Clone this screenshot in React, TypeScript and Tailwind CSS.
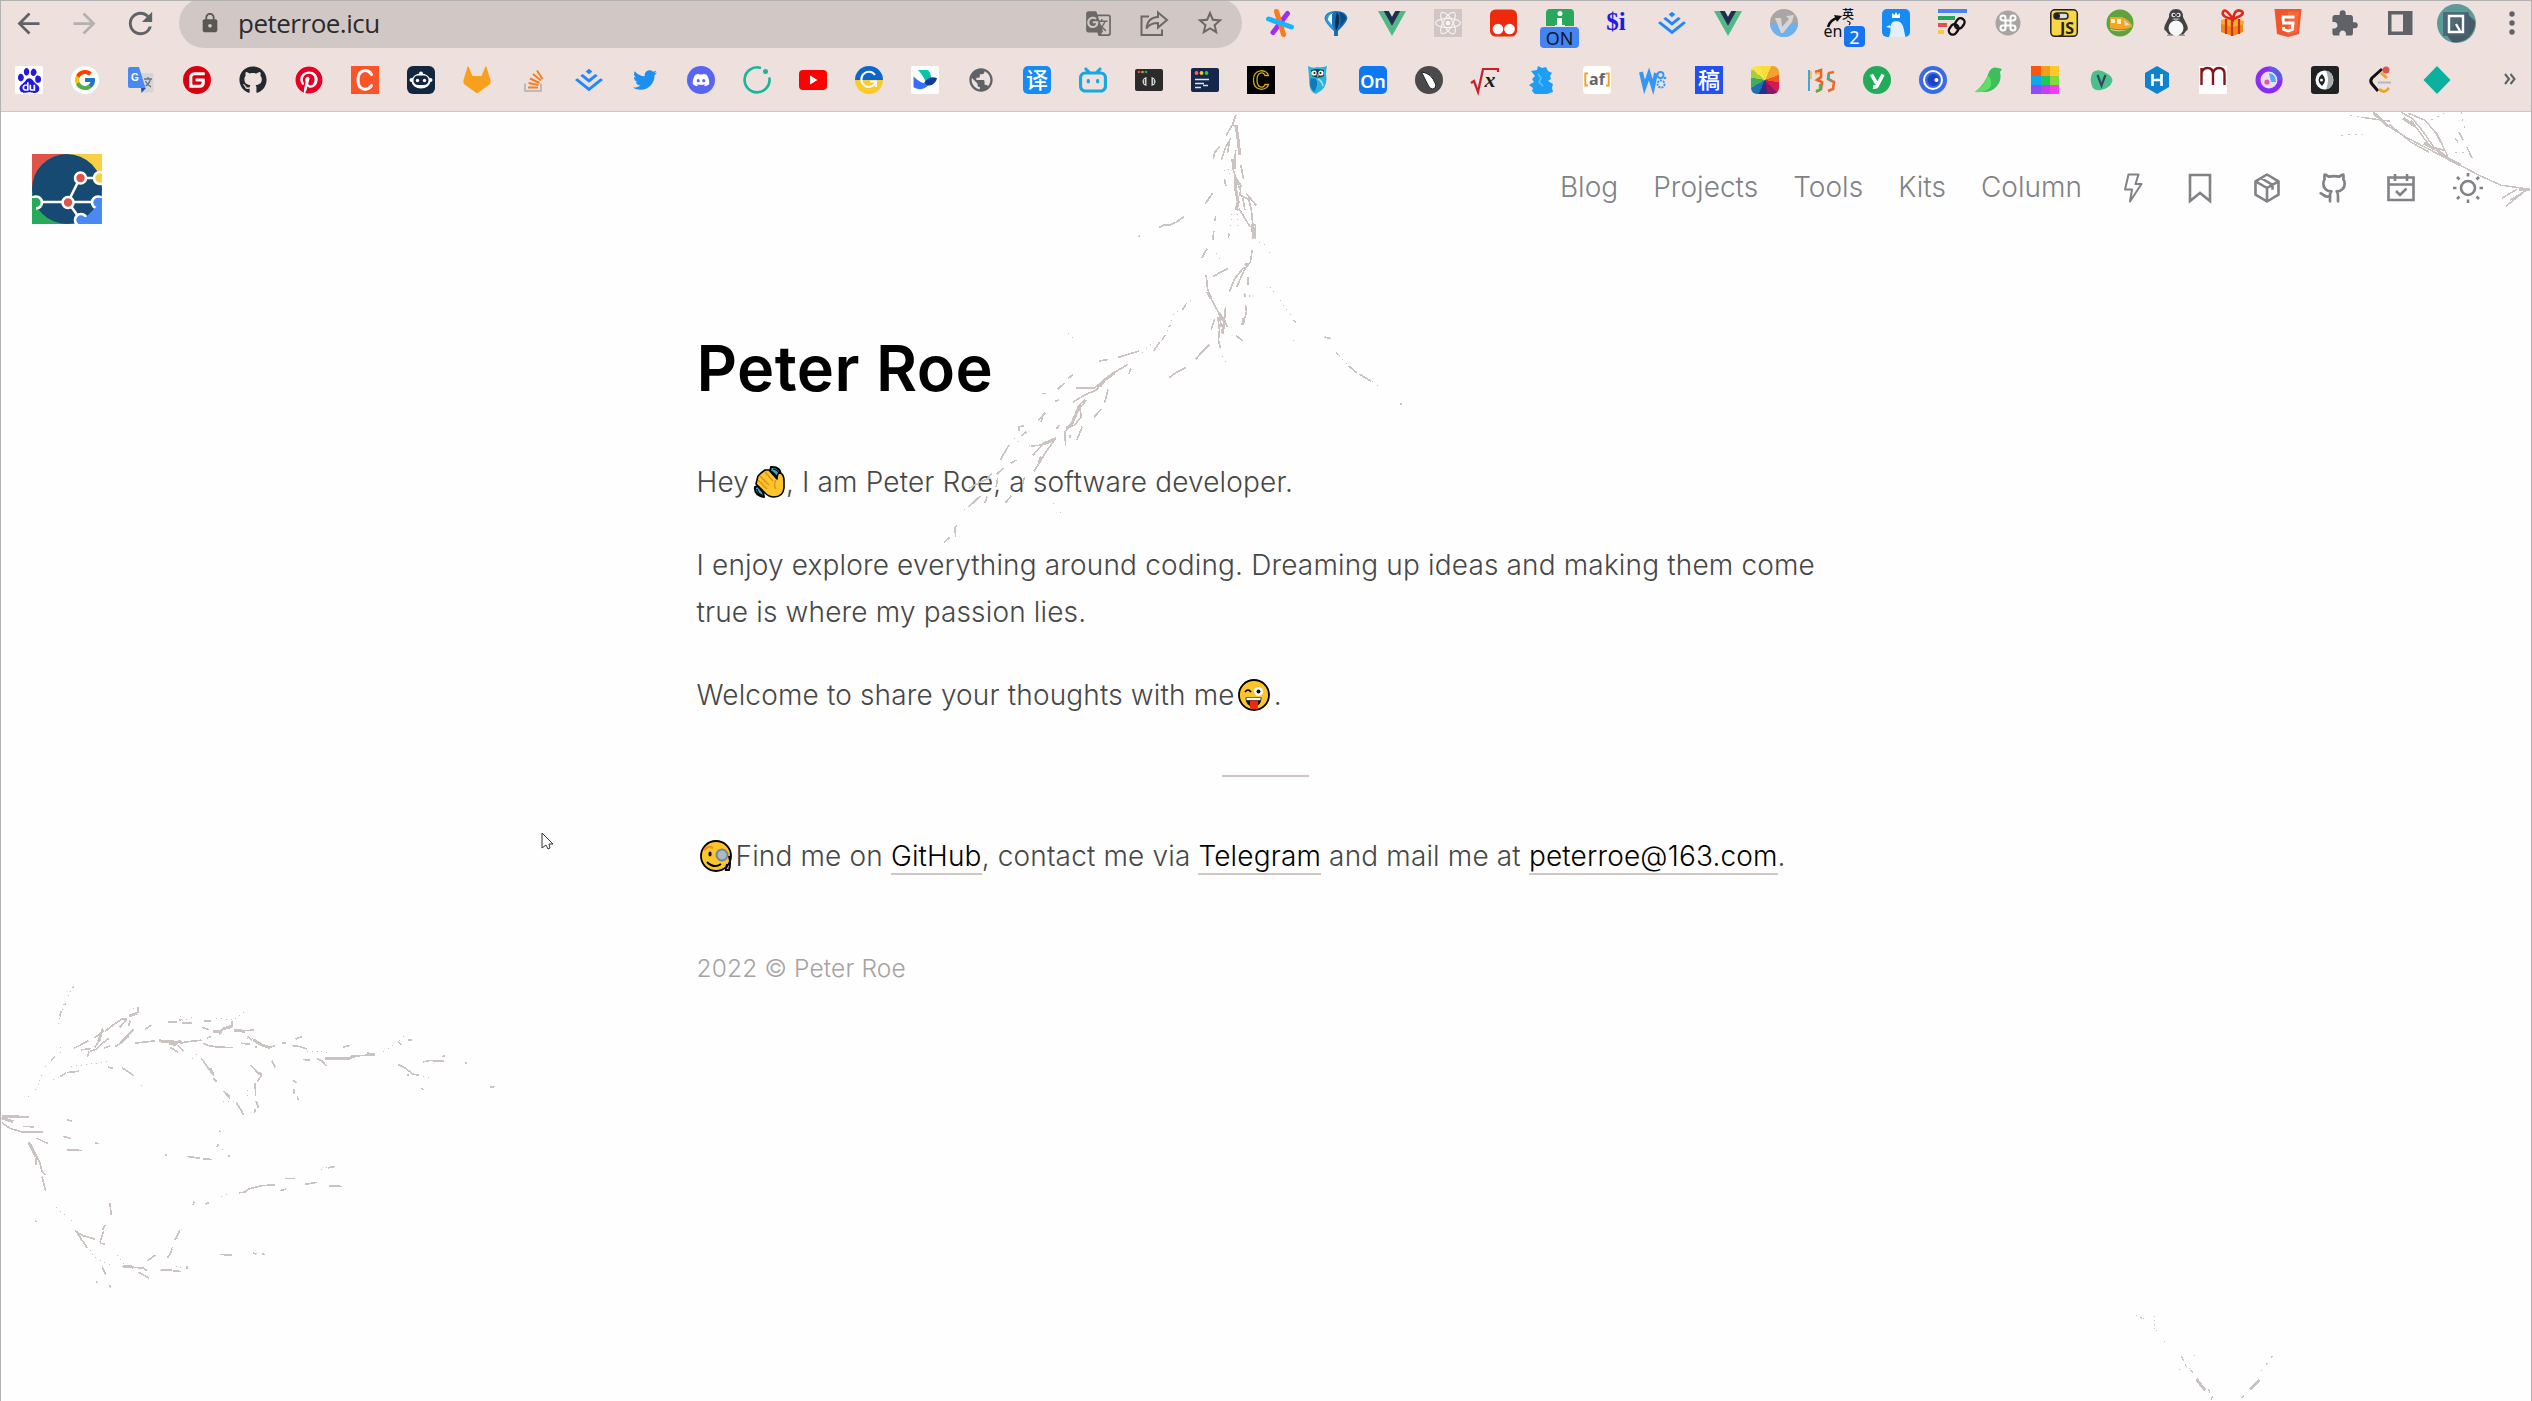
import React from "react";
import { MdGTranslate, MdStarOutline, MdExtension, MdPublic, MdLock, MdRefresh, MdArrowBack, MdArrowForward } from "react-icons/md";
import { FaGithub, FaPinterest, FaTwitter, FaDiscord, FaReact } from "react-icons/fa";
import { SiGitee, SiJuejin, SiBilibili, SiBaidu } from "react-icons/si";
import { FcGoogle } from "react-icons/fc";
import { Github } from "lucide-react";

type Kids = { children: React.ReactNode };

/* 28px icon canvas shared by the bookmark and extension glyphs */
const Ico = ({ children }: Kids) => (
  <svg viewBox="0 0 28 28" className="size-7 shrink-0 overflow-visible">{children}</svg>
);

const Cell = ({ children }: Kids) => (
  <div className="flex w-14 shrink-0 items-center justify-center">{children}</div>
);

const Label = ({ x = 14, y, size, fill, children, family = "Liberation Sans", weight = 700, italic = false }: {
  x?: number; y: number; size: number; fill: string; children: React.ReactNode; family?: string; weight?: number; italic?: boolean;
}) => (
  <text x={x} y={y} fontSize={size} fill={fill} textAnchor="middle" fontFamily={`"${family}", "Noto Sans CJK SC", sans-serif`} fontWeight={weight} fontStyle={italic ? "italic" : "normal"}>{children}</text>
);

const Vue = () => (
  <Ico>
    <path d="M0 2h5.6L14 17 22.4 2H28L14 27z" fill="#4dba87" />
    <path d="M5.6 2h5.2L14 7.8 17.200 2h5.2L14 17z" fill="#1f2f4c" />
  </Ico>
);

const Juejin = () => <SiJuejin className="size-7 text-[#1e88ff]" />;

const bookmarks: React.ReactNode[] = [
  <div className="flex size-7 items-center justify-center rounded-[2px] bg-white"><SiBaidu className="size-[25px] text-[#2319dc]" /></div>,
  <div className="flex size-7 items-center justify-center rounded-full bg-white"><FcGoogle className="size-6" /></div>,
  <Ico>
    <path d="M10 7h15a1.500 1.500 0 0 1 1.500 1.500V25a1.500 1.500 0 0 1-1.500 1.500H16z" fill="#d5d5d5" />
    <path d="M14 22h5l-4.500 5z" fill="#2a4fb0" />
    <path d="M3 1h9l6.500 21H3a2 2 0 0 1-2-2V3a2 2 0 0 1 2-2z" fill="#4889f4" />
    <Label x={8} y={15} size={10} fill="#fff">G</Label>
    <path d="M17 13h8M21 11v2M23.500 13c-1 4-3 6-5 7M18.500 15c1.500 3 3 4.500 5.500 6" stroke="#667780" strokeWidth="1.300" fill="none" />
  </Ico>,
  <div className="flex size-7 items-center justify-center rounded-full bg-white"><SiGitee className="size-7 text-[#d9000f]" /></div>,
  <FaGithub className="size-7 text-[#24292e]" />,
  <div className="flex size-7 items-center justify-center rounded-full bg-white"><FaPinterest className="size-7 text-[#e60023]" /></div>,
  <Ico>
    <rect width="28" height="28" fill="#fb542b" />
    <path d="M20.500 8.500C17 2.500 7 3 7 14s10 11 13.500 5.500" fill="none" stroke="#fff" strokeWidth="3" strokeLinecap="round" />
  </Ico>,
  <Ico>
    <rect width="28" height="28" rx="6" fill="#12263f" />
    <circle cx="14" cy="7.500" r="2" fill="#fff" />
    <ellipse cx="14" cy="15" rx="9.500" ry="7.500" fill="#fff" />
    <circle cx="4.500" cy="14" r="2" fill="#fff" /><circle cx="23.500" cy="14" r="2" fill="#fff" />
    <rect x="6.500" y="9.500" width="15" height="9.500" rx="4.500" fill="#12263f" />
    <circle cx="10.500" cy="14.500" r="1.700" fill="#fff" /><circle cx="17.500" cy="14.500" r="1.700" fill="#fff" />
  </Ico>,
  <Ico><path d="M14 27.500 1.500 18.500Q0 17 .4 14.500L4.500.8q.8-.8 1.400.5L9.500 10h9L22.100 1.300q.6-1.300 1.400-.5l4.100 13.700q.4 2.500-1.100 4z" fill="#f8a01d" /></Ico>,
  <Ico>
    <path d="M6 17.500v7.500h16v-7.500" fill="none" stroke="#bcbbbb" strokeWidth="2" />
    <path d="M9 21.500h10M9.500 17l10 2M11 12.500l9.500 4.500M14 8l8 6.500M18 4.500l5.500 8.500" stroke="#f48023" strokeWidth="2" />
  </Ico>,
  <Juejin />,
  <FaTwitter className="size-6 text-[#1d8ff2]" />,
  <div className="flex size-7 items-center justify-center rounded-full bg-[#5865f2]"><FaDiscord className="size-[18px] text-white" /></div>,
  <Ico>
    <path d="M17 1.700A12.500 12.500 0 1 0 26.500 12.500" fill="none" stroke="#16b79c" strokeWidth="2.600" strokeLinecap="round" />
    <circle cx="22.500" cy="5.500" r="2.500" fill="#16b79c" />
  </Ico>,
  <Ico>
    <rect x="0" y="4" width="28" height="20" rx="4" fill="#f00" />
    <path d="M11 9.500 18.500 14 11 18.500z" fill="#fff" />
  </Ico>,
  <Ico>
    <path d="M0 14a14 14 0 0 1 28 0z" fill="#0c66cc" /><path d="M0 14a14 14 0 0 0 28 0z" fill="#fccb2a" />
    <path d="M20 9A7.500 7.500 0 1 0 21 15.500h-6M21 15v6" fill="none" stroke="#fff" strokeWidth="2" />
  </Ico>,
  <Ico>
    <rect width="28" height="28" rx="2" fill="#fff" />
    <path d="M7 4h10q3 3 3 8l-5 4Q11 8 7 4z" fill="#00c8ac" />
    <path d="M2.500 10.500C7 15 12 18 18 18c-3 5-10 7-15.500 3z" fill="#3370ff" />
    <path d="M13 17c3-5 7-7 13-5-1 5-6 9-10 7z" fill="#133c9a" />
  </Ico>,
  <MdPublic className="size-7 text-[#5f6368]" />,
  <Ico><rect width="28" height="28" rx="5" fill="#168bf5" /><Label y={22} size={22} fill="#fff" family="Noto Sans CJK SC" weight={500}>译</Label></Ico>,
  <SiBilibili className="size-7 text-[#16a8e0]" />,
  <Ico>
    <rect y="3" width="28" height="22" rx="2" fill="#2b2b2b" />
    <circle cx="4" cy="6" r="1.300" fill="#ee4444" /><circle cx="7.500" cy="6" r="1.300" fill="#c9a227" /><circle cx="11" cy="6" r="1.300" fill="#2fa84f" />
    <path d="M11.500 11q-4 1-4 4.500t4 4.500zM16.500 11q4 1 4 4.500t-4 4.500z" fill="#dcdcdc" /><path d="M9.500 13v5M18.500 13v5" stroke="#555" strokeWidth="1.200" />
  </Ico>,
  <Ico>
    <rect y="2" width="28" height="24" rx="2" fill="#15284b" />
    <circle cx="5.500" cy="7" r="1.900" fill="#ff5f57" /><circle cx="10.500" cy="7" r="1.900" fill="#febc2e" /><circle cx="15.500" cy="7" r="1.900" fill="#28c840" />
    <path d="M4 13.500h14M4 17.500h9M4 21.500h6M12 19.500h5" stroke="#dbe3f0" strokeWidth="1.400" />
  </Ico>,
  <Ico>
    <rect width="28" height="28" fill="#000" />
    <path d="M21.500 9.500C20 3 6.500 2 6.500 14s13.500 11 15 4.500h-3.500c-1.500 4-8 4-8-4.500s6.500-8.500 8-4.500z" fill="none" stroke="#cda71e" strokeWidth="1.300" />
  </Ico>,
  <Ico>
    <path d="M5 0q5 3 9 1 5 1 10-1-1 4-1 8 2 10-4 16l-6 4q-6-2-6.500-9Q6 9 5 0z" fill="#2db3d9" />
    <path d="M8 4q6-2 13 0v6q-6 3-12 0z" fill="#14425a" />
    <circle cx="11" cy="7" r="2.600" fill="#fff" /><circle cx="18" cy="7" r="2.600" fill="#fff" /><circle cx="11.500" cy="7" r="1.100" fill="#222" /><circle cx="17.500" cy="7" r="1.100" fill="#222" />
    <path d="M13.500 8.500h2.500l-1.200 3z" fill="#f5a623" />
    <path d="M8 12q-3 8 3 14 5-7 2-13z" fill="#1478b8" /><path d="M15 13q4 2 5 7" stroke="#a9e4f5" strokeWidth="1.500" fill="none" />
  </Ico>,
  <Ico><rect width="28" height="28" rx="5" fill="#0d78f2" /><Label y={21.500} size={18} fill="#fff" family="Noto Sans" weight={600}>On</Label></Ico>,
  <Ico><circle cx="14" cy="14" r="14" fill="#4a4a4a" /><path d="M6.500 6q10 1 14 12 1 4-3 5-3 0-5-5z" fill="#fff" stroke="#222" strokeWidth="1" /></Ico>,
  <Ico>
    <path d="m0 17 3-2 4 11L12 3h15v3" fill="none" stroke="#c8202a" strokeWidth="2.200" />
    <Label x={19} y={21} size={22} fill="#1c1c1c" family="Liberation Serif" italic>x</Label>
  </Ico>,
  <Ico>
    <path d="m4 5 6-1 1-4 4 2 4-1 2 4 4 2-2 3 1 3-3 2 5 3-1 4 1 4-6 2H8l-3-3 1-3-4-3 5-3-2-3 3-3z" fill="#1e9df5" />
    <path d="M11 8l3 4-2 4 4 4" stroke="#56c2ff" strokeWidth="1.600" fill="none" />
  </Ico>,
  <Ico>
    <rect width="28" height="28" rx="4" fill="#fff" />
    <Label y={18.500} size={16} fill="#666" family="Noto Sans">af</Label>
    <path d="M5 7.500H2.300v12H5M23 7.500h2.700v12H23" fill="none" stroke="#f2a01e" strokeWidth="1.900" />
  </Ico>,
  <Ico>
    <path d="m2 6 3.500 15L10 8l4 13 3-14" fill="none" stroke="#3697f3" strokeWidth="4" />
    <circle cx="21.500" cy="9" r="3" fill="none" stroke="#3697f3" strokeWidth="1.800" /><circle cx="22" cy="18" r="3.500" fill="none" stroke="#3697f3" strokeWidth="2" strokeDasharray="2 1" /><circle cx="26" cy="12" r="1.300" fill="#3697f3" />
  </Ico>,
  <Ico><rect width="28" height="28" fill="#2450f2" /><Label y={22} size={22} fill="#fff" family="Noto Sans CJK SC" weight={500}>稿</Label></Ico>,
  <div className="size-7 rounded-[6px] bg-[conic-gradient(from_-20deg,#f9dc3c_0_45deg,#f2a32e_45deg_90deg,#ea5a2a_90deg_120deg,#d8194f_120deg_155deg,#8e1560_155deg_190deg,#2a2f8a_190deg_225deg,#1f6fb8_225deg_260deg,#3fae5c_260deg_300deg,#a5cf3c_300deg_330deg,#fbe34c_330deg)]" />,
  <Ico>
    <path d="M2 4v21" stroke="#2f9fd6" strokeWidth="1.800" /><path d="M4 5v8" stroke="#f3b63a" strokeWidth="1.500" />
    <path d="M8 6 14 4v7l-4 3 5 2-1 7-5 3" fill="none" stroke="#e8632a" strokeWidth="2.600" /><path d="M8 8l5-1" stroke="#f5c433" strokeWidth="2" /><path d="M13 18v6l-4 1" stroke="#52b352" strokeWidth="2.400" fill="none" />
    <path d="M27 6l-5 1-1 6 6 3-1 7-5 2" fill="none" stroke="#ee6a2c" strokeWidth="2.600" /><path d="M21.500 7v6l3 2" stroke="#38aea0" strokeWidth="2.200" fill="none" />
  </Ico>,
  <Ico><circle cx="14" cy="14" r="14" fill="#22ab58" /><path d="m8.500 8.500 5 9M20 8.500 14.500 19q-1 2.500-4.500 2" stroke="#fff" strokeWidth="3.600" fill="none" /></Ico>,
  <Ico>
    <circle cx="14" cy="14" r="14" fill="#3a6be6" /><circle cx="14" cy="14" r="9" fill="none" stroke="#fff" strokeWidth="2" /><circle cx="14.500" cy="14" r="6" fill="#1f45c4" /><circle cx="17.500" cy="14" r="2" fill="#fff" />
  </Ico>,
  <Ico>
    <path d="M14 6q3-6 9-4l4 1-2 3q2 8-3 14-5 6-13 6H0q10-8 14-20z" fill="#3cbf5a" /><path d="M13 9Q9 20 0 26q12 1 16-6 1-6-3-11z" fill="#62dd65" />
  </Ico>,
  <Ico>
    <path d="M0 0h10v10H0z" fill="#f9550e" /><path d="M10 0h9v10h-9z" fill="#f59e1c" /><path d="M19 0h9v10h-9z" fill="#fccb2a" />
    <path d="M0 10h10v9H0z" fill="#0ea8f0" /><path d="M10 10h9v9h-9z" fill="#22c55e" /><path d="M19 10h9v9h-9z" fill="#84da38" />
    <path d="M0 19h10v9H0z" fill="#8b4cf7" /><path d="M10 19h9v9h-9z" fill="#c43df0" /><path d="M19 19h9v9h-9z" fill="#f43df0" />
  </Ico>,
  <Ico><path d="M6 6q6-4 13 1 8 4 6 9-2 6-11 8-8 1-9-4Q2 12 6 6z" fill="#4cc08c" /><path d="m10.500 9 4 10.500L18.500 9" stroke="#34495e" strokeWidth="2.200" fill="none" /></Ico>,
  <Ico><path d="m14 0 12 7v14l-12 7-12-7V7z" fill="#0e83cd" /><path d="M9.500 8v12M18.500 8v12M9.500 14h9" stroke="#fff" strokeWidth="2.600" /></Ico>,
  <Ico>
    <rect width="28" height="28" fill="#fff" />
    <path d="M2.500 19V2M2.500 7Q4 2 8.500 2 14 2 14 8v11M14 7q1.500-5 6-5 5.500 0 5.500 6v11" stroke="#84151b" strokeWidth="2.400" fill="none" />
  </Ico>,
  <Ico>
    <circle cx="14" cy="14" r="11" fill="#e9dfee" stroke="#8a2cf5" strokeWidth="5" /><path d="M14 3a11 11 0 0 1 11 11" stroke="#5a5ce8" strokeWidth="5" fill="none" />
    <path d="M14 7q7 1 7 9h-5z" fill="#55a8f2" /><circle cx="12" cy="16" r="2.600" fill="#ee4fa8" />
  </Ico>,
  <Ico>
    <rect width="28" height="28" rx="3" fill="#202123" /><ellipse cx="13.500" cy="14" rx="9" ry="9.500" fill="#fff" /><path d="M15 4.500q4 9 0 19 7-1 7-9.500T15 4.500z" fill="#aaa" /><path d="M11 8q6 6 0 12-7-6 0-12z" fill="#202123" /><circle cx="10.500" cy="14" r="1.500" fill="#fff" />
  </Ico>,
  <Ico>
    <path d="M15 3 5 12q-2.500 3 0 6l6 7" fill="none" stroke="#111" strokeWidth="3" /><path d="M12 23q5 5 9 0l1-1M14 7l6 5" stroke="#f5a11e" strokeWidth="2.800" fill="none" /><path d="M11 16.500h13" stroke="#bcb9b8" strokeWidth="2.200" /><circle cx="19" cy="4" r="3.500" fill="#df5348" />
  </Ico>,
  <Ico><path d="m14 0 13.500 14L14 28 .5 14z" fill="#0bb09e" /></Ico>,
];

const extensions: React.ReactNode[] = [
  <Ico>
    <g strokeWidth="5" strokeLinecap="round"><path d="M21.500 4.500 7 23.500" stroke="#a32cf5" /><path d="m10.500 2.500 7 23" stroke="#ff7a1a" /><path d="m2.500 10 23 8" stroke="#19b4fb" /></g>
  </Ico>,
  <Ico>
    <path d="M2.500 9Q4 2 14 2t11.500 7q-1 5-9.500 13v5h-4v-5Q3 14 2.500 9z" fill="#176fb5" />
    <path d="M10 3q-3 7 2.500 18Q3 14 3.500 9 5 4 10 3z" fill="#2b9be6" /><path d="M11 4Q6 6 6 11l4 5V4z" fill="#f2faff" /><path d="M15 3q4 5 1 15l-2 4q-2-9 1-19z" fill="#0b3050" /><path d="M17 3q7 2 7 7l-6 8q2-8-1-15z" fill="#0d4a80" />
  </Ico>,
  <Vue />,
  <div className="flex size-7 items-center justify-center bg-[#cfc7c5]"><FaReact className="size-[26px] text-[#f8f5f4]" /></div>,
  <Ico><rect y=".5" width="27" height="27" rx="5.500" fill="#ee2a0c" /><circle cx="8" cy="20" r="5.300" fill="#fff" /><circle cx="19.500" cy="20" r="5.300" fill="#fff" /></Ico>,
  <div className="relative">
    <Ico><rect width="28" height="27" rx="4" fill="#27a85a" /><circle cx="14" cy="4.500" r="2.500" fill="#fff" /><path d="M11 9h5v7h3v4H9v-4h2z" fill="#fff" /></Ico>
    <div className="absolute -left-[6px] top-[17px] flex h-[22px] w-[39px] items-center justify-center rounded-[4px] border-t border-[#ede0dd] bg-[#4284f3] font-['Noto_Sans'] text-[18px] font-normal leading-none text-[#111827]">ON</div>
  </div>,
  <Ico><Label y={21} size={25} fill="#1d1de0" family="Liberation Serif" weight={700}>$i</Label></Ico>,
  <Juejin />,
  <Vue />,
  <Ico>
    <circle cx="14" cy="14" r="14" fill="#a9a7a6" /><path d="M0 14a14 14 0 0 0 28 0z" fill="#6db2ef" /><path d="M5 9h6l1 9L19 10l-3-3 8-1-2 7L13 24h-2z" fill="#ddd3d0" />
  </Ico>,
  <div className="relative">
    <Ico>
      <Label x={22} y={10} size={12} fill="#111" family="Noto Sans CJK SC" weight={500}>英</Label>
      <Label x={7} y={28} size={16} fill="#111" family="Noto Sans" weight={400}>en</Label>
      <path d="M2 18q2-7 9-9" stroke="#111" strokeWidth="2.600" fill="none" /><path d="m8 6 8 1-5 6z" fill="#111" /><path d="M21 12q5 1 2 4" stroke="#111" strokeWidth="1.200" fill="none" />
    </Ico>
    <div className="absolute left-[18px] top-[17px] flex h-[21px] w-[21px] items-center justify-center rounded-[4px] bg-[#1873f0] font-['Noto_Sans'] text-[18px] font-normal leading-none text-white">2</div>
  </div>,
  <Ico>
    <rect width="28" height="28" rx="5" fill="#168bf5" /><path d="m10 4 2.500 2L14 3l1.500 3L18 4v5h-8z" fill="#fff" /><path d="M7 28q2-5 1.500-10Q9 12 14 12q6 0 7.500 7 1 5 2 9z" fill="#e4effc" /><path d="m8 16-4 2 5 1z" fill="#fff" />
  </Ico>,
  <Ico>
    <path d="M0 0h29v4H0z" fill="#4a85ee" /><path d="M0 7h17v4H0z" fill="#28a55c" /><path d="M0 14h9v4H0z" fill="#df5348" /><path d="M0 21h6v4H0z" fill="#f7c93e" />
    <g fill="none" stroke="#111" strokeWidth="2.400"><rect x="18" y="9" width="8" height="11" rx="4" transform="rotate(35 22 14)" /><rect x="12" y="15" width="8" height="11" rx="4" transform="rotate(35 16 20)" /></g>
  </Ico>,
  <Ico><circle cx="14" cy="14" r="12.500" fill="#a8a4a3" /><path d="M11.500 8.800a2.500 2.500 0 1 0-2.500 2.700h10a2.500 2.500 0 1 0-2.500-2.700v10.400a2.500 2.500 0 1 0 2.500-2.700H9a2.500 2.500 0 1 0 2.500 2.700z" fill="none" stroke="#fff" strokeWidth="2" /></Ico>,
  <Ico>
    <rect x=".8" y=".8" width="26.500" height="26.500" rx="4" fill="#f8d648" stroke="#222" strokeWidth="1.500" /><rect x="4" y="4" width="14" height="6" rx="3" fill="#ddd" stroke="#222" strokeWidth="1.500" /><circle cx="7" cy="7" r="3" fill="#222" />
    <Label x={17} y={24.500} size={16} fill="#222" family="Noto Sans">JS</Label>
  </Ico>,
  <Ico><circle cx="14" cy="14" r="13.500" fill="#5fa33c" /><path d="M4 8h12q6 2 10 8v2q-8 4-22 1z" fill="#f5a51e" /><path d="M5 10h4v4H5zM11 10h4v5h-4z" fill="#fff1c9" /><path d="m18 11 6 5-5 1z" fill="#d8d8d8" /><path d="M4 20q12 3 20 0-9 4-19 1z" fill="#e8e0d0" /></Ico>,
  <Ico>
    <path d="M14 0q7 0 7 8l4 8q2 5-1 6l-3 4H7l-3-4q-3-1-1-6l4-8q0-8 7-8z" fill="#424242" /><ellipse cx="14" cy="19" rx="7.500" ry="7.500" fill="#f7f7f7" /><circle cx="11.500" cy="6" r="2.200" fill="#ddd" /><circle cx="16.500" cy="6" r="2.200" fill="#ddd" /><circle cx="12" cy="6" r="1" /><circle cx="16" cy="6" r="1" /><path d="M10 10q4-2 8 0l-4 2z" fill="#999" /><path d="M5 26q4-2 7 1H5zM16 27q3-3 7-1v1z" fill="#9a9a9a" />
  </Ico>,
  <Ico>
    <path d="m3 13 11 3 11-4v11l-10 4-12-4z" fill="#e8891a" /><path d="m3 11 11-3 12 4v3l-11 3L3 15z" fill="#f7ae2d" /><path d="M14 11v16M8 10v15M21 10v15" stroke="#d32f1c" strokeWidth="2.200" /><path d="M15 10Q3 8 5 3t10 7Q17-1 23 2t-8 8" fill="none" stroke="#e0291a" strokeWidth="2.600" />
  </Ico>,
  <Ico><path d="M.5 0h27L25 25l-11 3-11-3z" fill="#f1552b" /><path d="M14 2.500h11l-2 21L14 26z" fill="#f7693d" /><path d="M20.500 8H9l.4 6h9.600l-.7 6.500L14 22l-4.300-1.500-.3-2.500" fill="none" stroke="#fff" strokeWidth="2.900" /></Ico>,
  <MdExtension className="size-[29px] text-[#5f6368]" />,
  <Ico><path d="M2 2h24.500v24H2z" fill="#5f6368" /><path d="M5.500 5.500h11.500v17H5.500z" fill="#ede0dd" /></Ico>,
  <svg viewBox="0 0 39 39" className="size-[39px] shrink-0">
    <circle cx="19.500" cy="19.500" r="19.500" fill="#5b9c9b" /><path d="M9 30 29 9l9 8a19.500 19.500 0 0 1-23 21z" fill="#475a66" /><path d="M6 8h26v24H6z" fill="#4c6170" opacity=".85" /><path d="M12 12h14v16H12z" fill="none" stroke="#fff" strokeWidth="2.400" /><path d="m19 20 4 7" stroke="#fff" strokeWidth="2.400" />
  </svg>,
  <svg viewBox="0 0 6 24" className="h-6 w-[6px]"><g fill="#5f6368"><circle cx="3" cy="3" r="2.700" /><circle cx="3" cy="12" r="2.700" /><circle cx="3" cy="21" r="2.700" /></g></svg>,
];

const BrowserBar = () => (
  <header className="h-28 w-full overflow-hidden border-b border-[#cfc7c5] bg-[#ede0dd]">
    <div className="flex h-[46px] items-center">
      <Cell><MdArrowBack className="size-[33px] text-[#5f6368]" /></Cell>
      <Cell><MdArrowForward className="size-[33px] text-[#b5b0af]" /></Cell>
      <Cell><MdRefresh className="size-[35px] text-[#5f6368]" /></Cell>
      <div className="ml-[11px] flex h-[50px] w-[1063px] shrink-0 items-center rounded-full bg-[#d1c8c6] pl-[20px] pr-[4px]">
        <MdLock className="size-[22px] text-[#5a5654]" />
        <span className="ml-[17px] font-['Open_Sans'] text-[26px] font-normal leading-none tracking-[-0.5px] text-[#292b2e]">peterroe.icu</span>
        <div className="ml-auto flex text-[#6b6867]">
          <Cell><MdGTranslate className="size-[27px]" /></Cell>
          <Cell>
            <Ico><path d="M9 8H1.500v18.500H22V21" fill="none" stroke="currentColor" strokeWidth="2" transform="translate(0 -.5)" /><path d="M18 3.500 27 11l-9 7.500v-4.500q-8 0-11.500 5.500Q7.500 8.500 18 8z" fill="none" stroke="currentColor" strokeWidth="2" /></Ico>
          </Cell>
          <Cell><MdStarOutline className="size-[30px]" /></Cell>
        </div>
      </div>
      <div className="ml-[10px] flex items-center">{extensions.map((icon, i) => <Cell key={i}>{icon}</Cell>)}</div>
    </div>
    <div className="flex h-[68px] items-center pl-px">
      {bookmarks.map((icon, i) => <Cell key={i}>{icon}</Cell>)}
      <svg viewBox="0 0 12 12" className="ml-[39px] size-[12px] shrink-0 -translate-y-px"><path d="m1 1 4 5-4 5M6.500 1l4 5-4 5" fill="none" stroke="#5f6368" strokeWidth="2.100" /></svg>
    </div>
  </header>
);

const Logo = () => (
  <svg viewBox="0 0 70 70" className="size-[70px]">
    <path d="M0 0h35v35H0z" fill="#df5348" /><path d="M35 0h35v35H35z" fill="#f7d046" /><path d="M0 35h35v35H0z" fill="#27ab5b" /><path d="M35 35h35v35H35z" fill="#4a89f3" />
    <circle cx="35" cy="35" r="35" fill="#164a72" />
    <g stroke="#fff" strokeWidth="2.600">
      <path d="M36 48 48 24h18M4 48h60M36 48l12 17" fill="none" />
      <circle cx="48.500" cy="24" r="5.500" fill="#df5348" /><circle cx="36" cy="48.500" r="5.500" fill="#df5348" />
      <circle cx="68" cy="24" r="6" fill="#f7d046" /><circle cx="4" cy="48.500" r="6" fill="#27ab5b" /><circle cx="66" cy="48.500" r="6" fill="#4a89f3" /><circle cx="49" cy="66" r="6" fill="#4a89f3" />
    </g>
    <path d="M0 51h4v5H0zM0 44h4v3H0z" fill="#27ab5b" /><path d="M67 44h3v10h-3zM49 63h5l10-10h6v17H46z" fill="#4a89f3" /><path d="M66.500 20H70v8h-3.500z" fill="#f7d046" />
  </svg>
);

const NavIcon = ({ children }: Kids) => (
  <svg viewBox="0 0 32 32" className="size-8" fill="none" stroke="currentColor" strokeWidth="2.600">{children}</svg>
);

const Nav = () => (
  <nav className="flex items-center gap-[35px] text-[28px] leading-[47.6px] tracking-[0.03px] text-[#818186]">
    {["Blog", "Projects", "Tools", "Kits", "Column"].map((t) => <a key={t} href="#">{t}</a>)}
    <NavIcon><path d="M11.500 2.500h10L18.500 12h6L13 29.500l2-12H8z" strokeWidth="2" strokeLinejoin="round" /></NavIcon>
    <NavIcon><path d="M6 3h20v26l-10-8-10 8z" /></NavIcon>
    <NavIcon><path d="m16 2.500 11.500 6.800v13.400L16 29.500 4.500 22.700V9.300zM4.500 9.300 16 16l11.500-6.700M16 16v13.500M10 6l11.500 6.800v5" strokeLinejoin="round" /></NavIcon>
    <Github className="size-8" strokeWidth={2} />
    <NavIcon><path d="M3.500 5.500h25v22.500h-25zM3.500 12.500h25M10 2v7M22 2v7M11 19l4 4 6.500-6.500" /></NavIcon>
    <NavIcon><circle cx="16" cy="16" r="7" /><path d="M16 1v3.500M16 27.500v3.500M1 16h3.500M27.500 16h3.500M5 5l2.500 2.500M24.500 24.500l2.500 2.500M27 5l-2.500 2.500M7.500 24.500l-2.500 2.500" /></NavIcon>
  </nav>
);

const Wave = () => (
  <svg viewBox="0 0 34 34" className="-mr-px ml-[4px] inline-block size-[34px] overflow-visible align-[-7px]">
    <path d="M18 2q10-1 10 10l-5-1Q21 8 17 6zM2 22q-1 8 9 10l-1-5-5-6z" fill="#35a7c4" stroke="#000" strokeWidth="2" strokeLinejoin="round" />
    <path d="M20 4q6 1 6 6M4 24q1 5 5 6" fill="none" stroke="#000" strokeWidth="1.200" />
    <path d="M8 8 12 5l4 0 8 9q0-6 3-6 4 1 4 8v7q-1 9-10 9-5 0-9-4L3 19l1-4 1-4z" fill="#fcc52c" stroke="#000" strokeWidth="1.600" strokeLinejoin="round" />
    <path d="m7 11 9 9M5 15l9 9M12 7l8 9M23 15q-3 5 0 9" stroke="#e08f1b" strokeWidth="1.400" fill="none" />
  </svg>
);

const Wink = () => (
  <svg viewBox="0 0 34 34" className="ml-[2px] mr-[3px] inline-block size-[34px] overflow-visible align-[-7px]">
    <circle cx="17" cy="17" r="15" fill="#fcc52c" stroke="#000" strokeWidth="1.800" />
    <path d="M8 14q3-4 6 0" fill="none" stroke="#000" strokeWidth="1.700" /><circle cx="21.500" cy="13.500" r="4.500" fill="#fff" /><circle cx="21.500" cy="13.500" r="2" />
    <path d="M8.500 19.500h16q0 9-8 9t-8-9z" fill="#111" /><path d="M9.500 20h14v2.200h-14z" fill="#fff" /><path d="M13 22.500h8v6q0 3-4 3t-4-3z" fill="#ee2a0c" />
  </svg>
);

const Monocle = () => (
  <svg viewBox="0 0 34 34" className="ml-[2px] mr-[3px] inline-block size-[34px] overflow-visible align-[-7px]">
    <circle cx="17" cy="17" r="15" fill="#fcc52c" stroke="#000" strokeWidth="1.800" />
    <path d="M5 11q4-5 9-2" stroke="#f08d1c" strokeWidth="2.400" fill="none" /><ellipse cx="11" cy="15" rx="1.600" ry="2.400" />
    <circle cx="23" cy="16" r="5.500" fill="#a9bbc9" stroke="#6f879b" strokeWidth="2" /><path d="M8 23q7 7 14 2" fill="none" stroke="#000" strokeWidth="2" /><path d="M30 17q2 7 0 14h-3l1-6" stroke="#000" strokeWidth="2" fill="none" />
  </svg>
);

const Link = ({ children }: Kids) => (
  <a href="#" className="border-b-2 border-[#d0c7c5] text-black">{children}</a>
);

/* Plum branches growing in from the window edges */
const Branches = () => (
  <svg viewBox="0 0 2532 1401" className="pointer-events-none absolute inset-0 size-full" shapeRendering="crispEdges" fill="none" stroke="#cbc3c1">
    <g transform="translate(900 110) scale(.3333)" strokeWidth="5">
      <path strokeWidth="9" d="M1010 45 1016 90 1021 135M1004 145 1004 175M1008 200 1009 240 1016 275 1010 300M1058 340 1063 385M1035 465 1045 462M960 610 975 635 968 670M600 830 615 810 645 788M540 885 530 910 515 945 500 955M460 990 430 1002M425 1040 418 1060M1032 625 1030 645M925 545 935 565" />
      <path d="M1009 15 1000 42 980 76M1000 42 1009 50M994 84 978 112 965 150M990 95 984 128M962 108 946 126 941 145M1009 120 1003 165M998 145 1000 175 1008 200M1024 165 1032 205M1008 200 1024 225 1022 255 1048 268 1056 300 1060 345 1068 345 1066 385M1010 205 1022 240M1030 262 1036 300M1018 295 1040 330 1052 350M1040 250 1070 285M975 205 979 228M940 248 920 275M935 255 918 280M948 318 947 332M943 362 940 390M854 319 830 336 812 344 795 344 778 352M715 380 722 376M989 370 986 382M923 415 907 443M985 475 962 487 941 499M1058 420 1053 455 1035 478 1012 530M1035 470 1006 505 990 545M1045 502 1045 525M1037 550 1036 560M1050 555 1050 560M1038 585 1041 605 1030 645M920 495 924 535 937 570 960 612 965 650M978 592 975 630 983 650M955 620 960 660 957 690 963 715M945 628 935 658M1010 676 1030 693M929 704 905 728 889 748M860 772 835 784 808 803M860 583 848 600M812 645 808 650M796 675 788 690M780 697 763 722" />
      <path d="M686 762 640 790 610 815 590 840 555 855 520 876M530 833 585 833 612 812M556 868 540 885 530 910 515 945 496 965 498 1008M540 885 545 920 525 945 500 955M560 870 545 890M626 838 615 878M606 896 583 922M495 818 474 838M520 793 505 806M440 850 426 850M478 870 466 874M437 908 415 932M430 912 425 935M548 950 532 990M512 975 510 985M465 985 430 1002 400 1035M470 982 440 1025 418 1060 403 1084M455 995 425 1005 395 1008M380 965 366 978M374 947 358 950 358 962M328 1005 302 1050M350 1050 333 1060M312 1074 292 1092M278 1090 264 1105 235 1120 208 1135M270 1105 236 1118M294 1105 290 1130M375 1100 370 1120M242 1158 208 1190M263 1160 255 1180M335 1157 318 1178M172 1248 166 1252 168 1280M150 1282 133 1298M718 723 655 742M625 748 598 753M695 775 688 792M480 945 470 957" />
      <path d="M1275 680 1295 686M1310 728 1318 734M1348 768 1372 788M1380 792 1415 813M1503 880 1508 884M1183 630 1190 638" />
      <path strokeWidth="3" strokeDasharray="3 14" d="M1078 395 1110 410 1110 430M1110 530 1140 568 1190 638M1183 690 1183 706M1318 734 1350 770M1418 814 1442 830M977 160 992 190 975 180M950 430 962 448M1015 310 1015 350M997 310 992 350M875 570 820 615 812 650 780 700M752 703 720 735M330 973 355 995 395 1008M508 670 524 686M460 1180 488 1213M193 1200 210 1186M980 755 968 735M1165 773 1162 776" />
    </g>
    <g transform="translate(0 960) scale(.3333)" strokeWidth="5">
      <path strokeWidth="9" d="M476 243 530 247 545 245M508 250 530 255M640 214 665 216M668 208 696 199M702 212 735 214M760 240 785 255 812 264M975 295 1050 296M1050 293 1063 289M1100 282 1125 284M5 469 58 469M88 550 108 590M680 403 690 412M303 222 296 245M370 920 400 922M388 168 412 160M630 325 640 343M775 338 785 346M5 474 40 486M385 228 362 248" />
      <path d="M5 469 86 472M5 474 40 488M70 500 103 501M5 488 30 506 65 516 130 516M110 535 145 552M85 547 105 580 120 610 126 635 137 645M108 595 108 615M126 650 137 695M223 265 265 243M243 270 272 266M270 275 290 268 310 248 326 236M283 235 312 212M285 262 300 240 308 205M262 290 268 275M315 215 340 195 365 178 382 176M380 178 360 202M391 182 386 198M413 160 416 140M402 208 380 230 362 250 346 260M436 208 455 195M330 258 312 265M405 250 465 243M540 250 560 246 605 241M503 187 532 186M536 182 545 178M547 190 575 190M612 184 632 184M510 262 535 278M533 255 550 274M610 250 625 257 655 262 698 263M622 234 634 230M607 203 628 210M668 208 658 225M696 200 696 182M735 212 762 211M742 228 756 242M722 250 750 253M765 262 772 262M812 262 825 258M876 257 900 260 922 268M887 238 907 230M845 250 858 250M910 299 930 301M952 296 965 302 980 318M1063 289 1125 284M1030 262 1050 257M1226 240 1237 240M1195 245 1205 255M1195 314 1218 326 1240 343 1256 346M1270 306 1290 302 1334 304M1395 310 1403 310M1470 382 1486 380M1328 290 1335 287M1222 345 1228 345M1265 386 1272 390M604 295 625 325 642 348M640 355 650 365M670 393 690 415M708 428 722 448 731 466M752 315 770 335 785 346 772 366M766 370 767 410M769 424 776 445M766 458 765 447M816 302 826 322M883 388 883 404M892 410 896 422M880 362 890 368M180 350 198 340M202 338 238 334M325 322 338 325M367 324 385 336 402 348M183 153 180 170M221 80 217 85M198 130 194 135M165 290 154 302M190 530 212 536M200 570 245 572M285 550 296 551M202 480 216 484M562 590 600 595M610 597 635 599M684 590 690 588M650 562 656 554M495 586 500 586M658 512 662 516" />
      <path d="M718 699 735 697 745 688 768 682 790 677 826 676M855 656 884 656M840 693 858 688M915 674 950 668M985 624 1004 620M988 678 1028 680M617 733 628 728M583 725 580 735M330 730 334 765M315 796 308 810M311 815 300 848M226 813 245 826 285 838M230 816 245 840 262 864M300 850 316 853M306 920 318 945M330 975 332 986M292 965 289 970M367 920 430 925 440 932M415 937 430 945 448 956M480 932 515 930M518 934 543 935M562 918 562 927M517 866 512 880 502 895M540 812 525 840M467 885 443 903M660 884 695 886M760 880 770 883M786 883 795 884M107 788 108 782" />
      <path strokeWidth="3" strokeDasharray="3 12" d="M221 80 190 135 175 195M182 262 182 285M75 422 110 385 140 310 155 300M160 360 180 350M320 306 210 320M398 148 415 142M540 168 545 182 583 172M648 176 700 180 735 155M920 275 950 275 985 278M1150 275 1170 265 1220 223M1256 346 1288 352M425 362 422 388M270 870 280 890 305 905 335 916M158 733 205 775 218 785M545 808 515 870M527 920 545 925M650 718 690 700M655 556 668 568M950 637 985 622M760 237 742 235M670 426 705 425M743 390 745 420M590 283 565 310M350 885 370 912" />
    </g>
    <g transform="translate(2100 1290) scale(.3333)" strokeWidth="5">
      <path strokeWidth="9" d="M292 268 318 302M452 300 482 271" />
      <path strokeWidth="4" d="M122 82 130 86M246 200 254 214M259 222 260 228M275 240 281 250M328 298 332 310M427 325 434 317M286 195 286 200M501 224 506 220M516 202 521 199M340 319 337 330" />
      <path strokeWidth="3" strokeDasharray="3 9" d="M111 76 124 82 142 92M166 80 166 124 178 118M196 153 196 158M241 238 241 242M260 228 275 240M487 244 492 236" />
    </g>
    {/* top-right branch, in page coordinates */}
    <g strokeWidth="1.500">
      <path strokeWidth="3" d="M2375 113 2389 126M2425 143 2436 149M2437 149 2450 159 2462 165M2520 189 2531 189M2404 118 2416 126" />
      <path d="M2374 112 2391 127 2407 137 2426 147 2445 157 2461 165 2480 175 2502 185 2531 189M2402 112 2413 118 2423 130 2435 147 2451 160M2409 113 2426 120 2437 133 2449 156M2412 120 2425 138 2433 148M2362 117 2391 121M2531 188 2511 200M2527 190 2507 206M2518 189 2503 198M2468 147 2473 158M2460 132 2464 140M2456 138 2459 142M2427 145 2445 150M2437 132 2444 145M2390 124 2412 142 2430 152" />
      <path strokeWidth="1" strokeDasharray="2 5" d="M2351 115 2375 119M2342 135 2364 134M2432 120 2445 113M2456 152 2468 153M2462 112 2466 130" />
    </g>
  </svg>
);

export default function App() {
  return (
    <div className="relative flex h-[1401px] w-full flex-col overflow-hidden border-r border-[#b3b1b1] bg-[#fefefe] font-['Inter',sans-serif] font-light [font-optical-sizing:none]">
      <BrowserBar />
      <div className="flex items-start justify-between pl-8 pr-[47px] pt-[42px]">
        <Logo />
        <div className="pt-[10px]"><Nav /></div>
      </div>
      <main className="mx-auto mt-[109px] w-[1138px] text-[28px] leading-[47.6px] tracking-[0.155px] text-[#474747]">
        <h1 className="mb-[56px] text-[63px] font-semibold leading-[70px] tracking-[0.4px] text-black">Peter Roe</h1>
        <p className="mb-[35px]">Hey<Wave />, I am Peter Roe, a software developer.</p>
        <p className="mb-[35px]">I enjoy explore everything around coding. Dreaming up ideas and making them come true is where my passion lies.</p>
        <p>Welcome to share your thoughts with me<Wink />.</p>
        <hr className="mx-auto mb-[56px] mt-[56px] h-[2px] w-[87px] border-0 bg-[#d0c7c5]" />
        <p className="whitespace-nowrap"><Monocle />Find me on <Link>GitHub</Link>, contact me via <Link>Telegram</Link> and mail me at <Link>peterroe@163.com</Link>.</p>
        <p className="mt-[67px] text-[24.5px] leading-[41.65px] text-[#a5a2a2]">2022 © Peter Roe</p>
      </main>
      <Branches />
      <div className="pointer-events-none absolute inset-0 border-l border-t border-[#b3b1b1]" />
      <svg viewBox="0 0 14 18" className="absolute left-[541px] top-[832px] h-[18px] w-[14px]"><path d="M1 1v15l4-3 2 4 2-1-1-4h4z" fill="#fff" stroke="#333" strokeWidth="1" /></svg>
    </div>
  );
}
